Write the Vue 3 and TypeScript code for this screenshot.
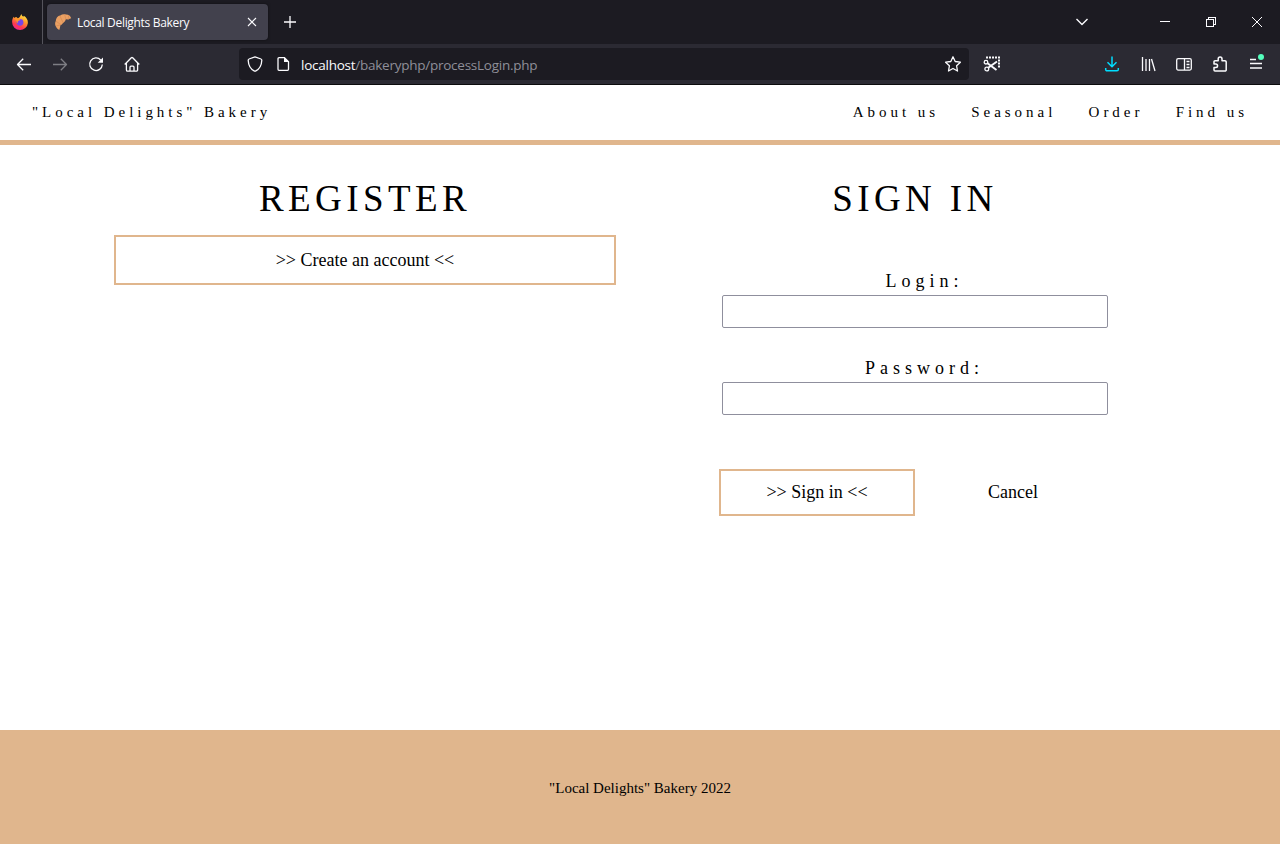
<script setup lang="ts">
const links: string[] = ['About us', 'Seasonal', 'Order', 'Find us']
</script>

<template>
  <div class="window">
    <div class="tabs">
      <div class="pinned">
        <svg width="18" height="18" viewBox="0 0 18 18">
          <defs>
            <linearGradient id="flame" x1="0.8" y1="0" x2="0.3" y2="1">
              <stop offset="0" stop-color="#fff14a" /><stop offset="0.4" stop-color="#ff9a2b" />
              <stop offset="0.75" stop-color="#ff394f" /><stop offset="1" stop-color="#f0239a" />
            </linearGradient>
          </defs>
          <path fill="url(#flame)" d="M10.400 1c.2 1.500 1 2.100 2 2.800l.4-1c2.500 1.600 4.200 3.900 4.100 7.100A7.900 7.900 0 0 1 9 17 7.900 7.900 0 0 1 1.100 9c0-2.200.6-3.900 1.700-5.300l.6 1.200C4 4.200 4.600 4 5.300 4l1.500 1.300C8.500 5 9.500 2.700 10.400 1z" />
          <circle cx="9" cy="9.300" r="3.400" fill="#7845e8" />
          <path fill="#ff9628" d="M3.300 5.600c1.500-.8 2.700-.4 3.500.4l2.500.3c-.2 1-1.500 1.400-2 1.800-.8.700-.4 1.400-.5 2.100-1-.5-1.300-1.300-1.200-2.200z" />
        </svg>
      </div>
      <div class="tab">
        <svg width="18" height="18" viewBox="0 0 18 18">
          <path fill="#eaa063" d="M5.300 17c-1.600-.6-2.800-1.800-3.400-3.400C.8 12 .9 9.700 1.800 8 1.900 5 3.700 2.900 6.200 2.500 8 1.100 10.300.9 12 1.600c2.800.1 4.600 1.600 5.200 3.600-1.200.2-2 .6-2.800 1.300l-2.600-.3c-.4 1.800-1.500 2.900-2.700 3.700-.9 1.200-1.700 1.900-2.700 2.300-.3 1.600-.6 3.400-1.100 4.800z" />
          <path fill="none" stroke="#d08550" stroke-width=".6" d="m5.900 2.800 3.300 7M1.900 8.200l5 3.400M10.600 1.400l1.200 4.600M2.200 13l4-1.100M14.600 2.400l-.4 3.900" />
        </svg>
        <span class="tab-title">Local Delights Bakery</span>
        <svg class="close" width="10" height="10" viewBox="0 0 10 10"><path d="m1 1 8 8M9 1 1 9" /></svg>
      </div>
      <svg class="plus" width="14" height="14" viewBox="0 0 14 14"><path d="M7 1v12M1 7h12" /></svg>
      <div class="controls">
        <svg width="14" height="10" viewBox="0 0 14 10"><path d="m1.500 2 5.500 5.500L12.500 2" stroke-width="1.400" /></svg>
        <svg width="10" height="10" viewBox="0 0 10 10" shape-rendering="crispEdges"><path d="M0 4.500h10" /></svg>
        <svg width="10" height="10" viewBox="0 0 10 10" shape-rendering="crispEdges"><path d="M.5 2.500h7v7h-7zM2.500 2.500v-2h7v7h-2" /></svg>
        <svg width="10" height="10" viewBox="0 0 10 10"><path d="m0 0 10 10M10 0 0 10" /></svg>
      </div>
    </div>

    <div class="toolbar">
      <div class="navigation">
        <svg width="16" height="16" viewBox="0 0 16 16"><path d="M15 8.500H1.500M7.200 2.800 1.500 8.500l5.700 5.700" /></svg>
        <svg class="muted" width="16" height="16" viewBox="0 0 16 16"><path d="M1 8.500h13.500M8.800 2.800l5.700 5.700-5.700 5.700" /></svg>
        <svg width="16" height="16" viewBox="0 0 16 16"><path d="M12.700 4A6.300 6.300 0 1 0 14.300 8.500" /><path class="solid" d="M15 1.500v5.300H9.700z" /></svg>
        <svg width="16" height="16" viewBox="0 0 16 16"><path d="m.7 8.500 6.600-6.700q.7-.6 1.400 0l6.600 6.700M2.400 7v7a1.200 1.200 0 0 0 1.200 1.200h8.800a1.200 1.200 0 0 0 1.200-1.200V7M6 15.200v-4a1 1 0 0 1 1-1h2a1 1 0 0 1 1 1v4" /></svg>
      </div>
      <div class="address">
        <svg width="16" height="16" viewBox="0 0 16 16"><path d="M8 .8 14 3c.6.200.8.600.8 1.200-.2 5-2 8.700-6.300 10.900q-.5.200-1 0C3.200 12.900 1.400 9.200 1.200 4.200c0-.6.200-1 .8-1.200z" /></svg>
        <svg class="page-icon" width="14" height="16" viewBox="0 0 14 16"><path d="M8.500 1.700H3a1 1 0 0 0-1 1v10.600a1 1 0 0 0 1 1h8.500a1 1 0 0 0 1-1V5.700z" /><path class="solid" d="M8 1v5h5.200z" /></svg>
        <span class="url"><b>localhost</b>/bakeryphp/processLogin.php</span>
        <svg class="star" width="18" height="18" viewBox="0 0 18 18"><path d="m9 1.800 2.200 4.700 5.200.7-3.800 3.600.9 5.200L9 13.500 4.500 16l.9-5.200-3.800-3.600 5.200-.7z" /></svg>
      </div>
      <svg class="snip" width="18" height="16" viewBox="0 0 18 16">
        <path d="M3 1.500h12M16 .5v11" stroke-width="2" stroke-dasharray="2 1" />
        <circle cx="3" cy="6.200" r="1.800" /><circle cx="3.800" cy="13" r="1.900" />
        <path d="m4.500 7.200 9 6.800M5.200 11.800l8.800-6.300" stroke-width="1.900" />
      </svg>
      <div class="actions">
        <svg class="download" width="16" height="16" viewBox="0 0 16 16"><path d="M8 .5v10M3.500 6.200 8 10.700l4.500-4.500M1.700 12v1.500a1.300 1.300 0 0 0 1.300 1.300h10a1.300 1.300 0 0 0 1.300-1.300V12" /></svg>
        <svg class="library" width="16" height="16" viewBox="0 0 16 16"><path d="M2.500 1v14M6 3v12M9.500 3v12M11.500 3l3.500 12" /></svg>
        <svg class="sidebar" width="18" height="16" viewBox="0 0 18 16"><rect x="1.700" y="2.700" width="14.600" height="11.400" rx="1.500" /><path d="M9.500 3v11M11.500 5.500h3M11.500 8.500h3M11.500 11.500h3" /></svg>
        <svg class="puzzle" width="16" height="16" viewBox="0 0 16 16"><path d="M2 8V5.700a1 1 0 0 1 1-1h3.200V2.900a1.900 1.900 0 0 1 3.800 0v1.800h3a1.200 1.200 0 0 1 1.200 1.200v8a1.200 1.200 0 0 1-1.200 1.200H3a1 1 0 0 1-1-1v-2.600h1.800a1.750 1.750 0 0 0 0-3.500z" /></svg>
        <div class="menu">
          <svg width="16" height="16" viewBox="0 0 16 16"><path d="M2 3.500h6M2 7.500h12M2 12h12" /></svg>
          <i class="dot"></i>
        </div>
      </div>
    </div>

    <header>
      <span>"Local Delights" Bakery</span>
      <nav><a v-for="link in links" :key="link">{{ link }}</a></nav>
    </header>

    <main>
      <section class="register">
        <h1>REGISTER</h1>
        <button type="button">&gt;&gt; Create an account &lt;&lt;</button>
      </section>
      <section class="signin">
        <h1>SIGN IN</h1>
        <form @submit.prevent>
          <label for="login">Login:</label>
          <input id="login" type="text" />
          <label for="password">Password:</label>
          <input id="password" type="password" />
          <div class="buttons">
            <button type="submit">&gt;&gt; Sign in &lt;&lt;</button>
            <button type="reset" class="cancel">Cancel</button>
          </div>
        </form>
      </section>
    </main>

    <footer>"Local Delights" Bakery 2022</footer>
  </div>
</template>

<style>
body { margin: 0; overflow: hidden; }
</style>

<style scoped>
* { box-sizing: border-box; }
.window { width: 1280px; height: 844px; display: flex; flex-direction: column; background: #fff; color: #000; font-family: "Liberation Serif", "Times New Roman", serif; }
svg { display: block; flex: none; fill: none; stroke: #fbfbfe; stroke-width: 1.3; stroke-linecap: butt; stroke-linejoin: round; }
.solid { fill: #fbfbfe; stroke: none; }
.tabs { height: 44px; flex: none; display: flex; align-items: center; background: #1c1b22; font-family: "Open Sans", "Noto Sans", sans-serif; }
.pinned { width: 43px; height: 44px; border-right: 1px solid #55545c; padding: 13px 0 0 11px; }
.pinned svg, .tab > svg:first-child { stroke: none; }
.tab { width: 221px; height: 36px; margin-left: 4px; border-radius: 4px; background: #42414d; display: flex; align-items: center; padding: 0 11px 0 7px; box-shadow: 0 0 3px rgba(0,0,0,.5); }
.tab-title { color: #fbfbfe; font-size: 12px; letter-spacing: -.32px; margin-left: 5px; padding-top: 1px; white-space: nowrap; }
.close { margin-left: auto; stroke-width: 1.100; }
.plus { margin-left: 15px; }
.controls { margin-left: auto; display: flex; align-items: center; padding-right: 18px; }
.controls svg { stroke-width: 1; }
.controls svg + svg { margin-left: 36px; }
.controls svg:nth-child(2) { margin-left: 71px; }
.toolbar { height: 41px; flex: none; display: flex; align-items: center; background: #2b2a33; border-bottom: 1px solid #0c0c0d; }
.navigation { display: flex; gap: 20px; margin-left: 16px; width: 223px; }
.muted { opacity: .4; }
.address { width: 730px; height: 32px; background: #1c1b22; border-radius: 4px; display: flex; align-items: center; padding: 0 7px 0 8px; }
.page-icon { margin-left: 13px; }
.url { margin-left: 11px; padding-top: 2px; color: #8f8f99; font: 13.5px "Open Sans", "Noto Sans", sans-serif; letter-spacing: -.25px; white-space: nowrap; }
.url b { font-weight: 400; color: #fbfbfe; }
.star { margin-left: auto; }
.snip { margin-left: 14px; }
.actions { margin-left: auto; display: flex; align-items: center; gap: 20px; padding-right: 16px; }
.actions svg { stroke-width: 1.300; }
.actions .download { stroke: #00ddff; stroke-width: 1.500; }
.actions .sidebar { margin: 0 -1px; }
.actions .puzzle { stroke-width: 1.500; }
.menu { position: relative; }
.dot { position: absolute; width: 6px; height: 6px; right: 0; top: -2px; border-radius: 50%; background: #54ffbd; }
header { height: 60px; flex: none; border-bottom: 5px solid #e0b68d; display: flex; align-items: center; justify-content: space-between; padding: 0 29px 0 32px; font-size: 15px; letter-spacing: 3.960px; }
header nav { display: flex; gap: 32.300px; padding-right: 3px; }
main { flex: 1; display: flex; }
section { display: flex; flex-direction: column; align-items: center; }
.register { width: 502px; margin-left: 114px; }
.signin { width: 392px; margin-left: 103px; }
h1 { margin: 32px 0 0; height: 58px; line-height: 43px; font-size: 37px; font-weight: 400; letter-spacing: 4.400px; }
button { border: 2px solid #e0b68d; background: #fff; color: #000; padding: 0; font-family: inherit; font-size: 18px; }
.register button { width: 502px; height: 50px; }
form { width: 392px; display: flex; flex-direction: column; padding: 36px 3px 0; }
label { height: 24px; line-height: 21px; text-align: center; padding-left: 19px; font-size: 18px; letter-spacing: 5px; }
input { width: 386px; height: 33px; margin: 0 0 30px; padding: 0; border: 1px solid #8f8f9d; border-radius: 2px; }
.buttons { display: flex; margin: 24px 0 0 -3px; }
.buttons button { width: 196px; height: 47px; flex: none; }
.buttons .cancel { border-color: transparent; background: transparent; }
footer { height: 114px; flex: none; display: flex; align-items: center; justify-content: center; padding-top: 2px; background: #e0b68d; font-size: 15px; }
</style>
